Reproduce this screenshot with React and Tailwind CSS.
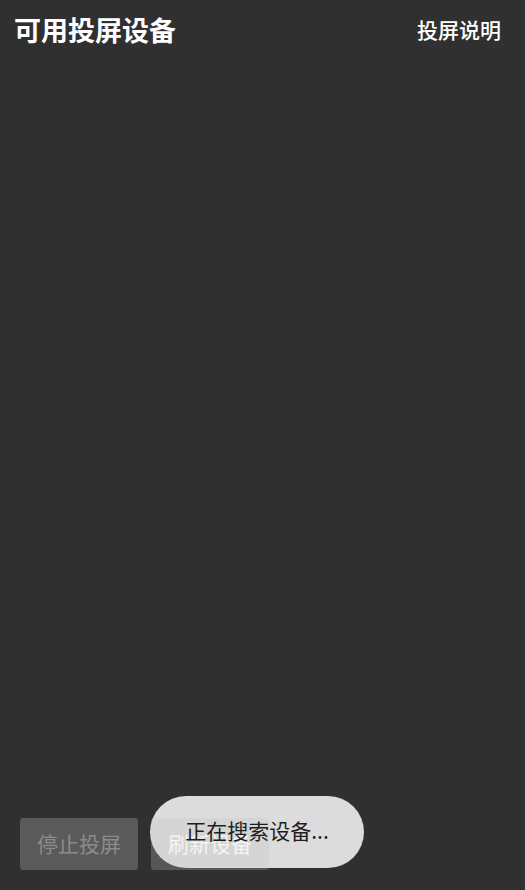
const cjk = { fontFamily: '"Noto Sans CJK SC", "Noto Sans", sans-serif' };

function Header() {
  return (
    <header className="flex h-[62px] items-center justify-between pb-[4px] pl-[14px] pr-[24px]">
      <h1 className="text-[27px] font-bold leading-none text-white">可用投屏设备</h1>
      <button className="text-[21px] font-medium leading-none text-white">投屏说明</button>
    </header>
  );
}

function Toast({ text }) {
  // 不设 z-index，让底色和文字分层叠放
  return (
    <div className="absolute left-[150px] top-[796px] flex h-[72px] w-[214px] items-center justify-center">
      <span className="absolute inset-0 z-10 rounded-full bg-[#dcdcdc]" />
      <span className="relative z-30 -mt-[2px] text-[21px] text-[#1e1e1e]">{text}</span>
    </div>
  );
}

export default function App() {
  return (
    <div className="relative flex h-[890px] w-full flex-col bg-[#303030]" style={cjk}>
      <Header />
      <div className="flex-1" />
      <div className="flex gap-[13px] px-[20px] pb-[20px]">
        <button
          disabled
          className="flex h-[52px] w-[118px] items-center justify-center rounded-[3px] bg-[#5a5a5a] text-[21px] text-[#8c8c8c]"
        >
          停止投屏
        </button>
        <button className="relative h-[52px] w-[118px] rounded-[3px] bg-[#5a5a5a]">
          <span className="absolute inset-0 z-20 flex items-center justify-center rounded-[3px] bg-black/[0.03] text-[21px] text-[#f4f4f4]">
            刷新设备
          </span>
        </button>
      </div>
      <Toast text="正在搜索设备..." />
    </div>
  );
}
